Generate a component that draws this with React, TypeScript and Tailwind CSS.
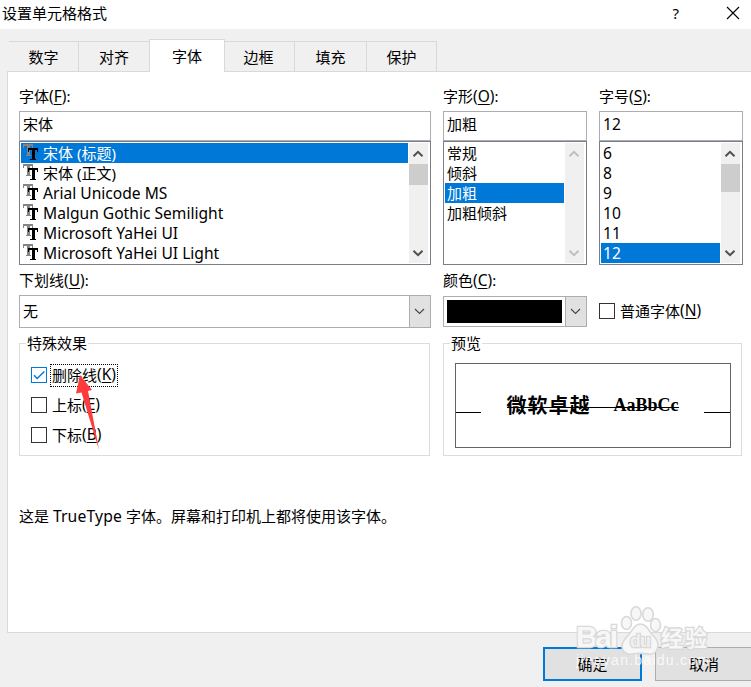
import { useState } from "react";
import type { ReactNode } from "react";
import clsx from "clsx";

const tabs = [
  { name: "数字", width: "w-[70px]" },
  { name: "对齐", width: "w-[71px]" },
  { name: "字体", width: "-ml-px w-[76px]" },
  { name: "边框", width: "w-[70px] pr-0.5" },
  { name: "填充", width: "w-[72px]" },
  { name: "保护", width: "w-[70px]" },
];

const fonts = [
  "宋体 (标题)",
  "宋体 (正文)",
  "Arial Unicode MS",
  "Malgun Gothic Semilight",
  "Microsoft YaHei UI",
  "Microsoft YaHei UI Light",
];
const fontStyles = ["常规", "倾斜", "加粗", "加粗倾斜"];
const sizes = ["6", "8", "9", "10", "11", "12"];

function Hotkey({ letter }: { letter: string }) {
  return (
    <span className="text-[15.5px]">
      (<span className="underline underline-offset-2">{letter}</span>)
    </span>
  );
}

function Label({ text, hotkey }: { text: string; hotkey: string }) {
  return (
    <div className="h-5 leading-5 whitespace-nowrap">
      {text}
      <Hotkey letter={hotkey} />:
    </div>
  );
}

function Chevron({ up, faded }: { up?: boolean; faded?: boolean }) {
  return (
    <svg
      width="12"
      height="8"
      viewBox="0 0 12 8"
      fill="none"
      strokeWidth="2"
      className={clsx("mr-px", faded ? "stroke-[#bfbfbf]" : "stroke-[#505050]")}
    >
      <path d={up ? "M1.5 6.3 6 1.8l4.5 4.5" : "M1.5 1.7 6 6.2l4.5-4.5"} />
    </svg>
  );
}

function TrueTypeIcon() {
  return (
    <svg width="16" height="18" viewBox="0 0 16 18" shapeRendering="crispEdges" className="shrink-0">
      <path d="M0 0h10v4H9V2H7v9h1v1H3v-1h1V2H1v2H0z" fill="#848484" />
      <path d="M5 4h10v4h-1V6h-2v9h1v1H7v-1h2V6H6v2H5z" fill="#000" />
    </svg>
  );
}

function ListBox({
  items,
  value,
  onChange,
  icons,
  thumb,
}: {
  items: string[];
  value: string;
  onChange: (v: string) => void;
  icons?: boolean;
  thumb?: string;
}) {
  return (
    <div className="flex h-[124px] border border-[#7a7e87] bg-white p-px">
      <ul className="mr-px flex-1">
        {items.map((item) => (
          <li
            key={item}
            onClick={() => onChange(item)}
            className={clsx(
              "flex h-5 items-center gap-1 whitespace-pre pl-0.5 leading-5",
              item === value && "bg-[#0078d7] text-white"
            )}
          >
            {icons && <TrueTypeIcon />}
            <span className={/^[\x20-\x7e]+$/.test(item) ? "text-[15.6px]" : ""}>{item}</span>
          </li>
        ))}
      </ul>
      {/* Scrollbar */}
      <div className="mr-px flex w-[19px] flex-col items-center bg-[#f0f0f0]">
        <div className="flex h-[21px] shrink-0 items-center">
          <Chevron up faded={!thumb} />
        </div>
        {thumb && <div className={clsx("w-full bg-[#cdcdcd]", thumb)} />}
        <div className="mt-auto flex h-[21px] items-center">
          <Chevron faded={!thumb} />
        </div>
      </div>
    </div>
  );
}

function Field({ children }: { children: ReactNode }) {
  return (
    <div className="flex h-[30px] items-center border border-[#abadb3] bg-white pb-[3px] pl-[3px]">{children}</div>
  );
}

function ComboButton() {
  return (
    <div className="flex w-[22px] items-center justify-center border border-[#abadb3] bg-[#e1e1e1] pr-px">
      <svg width="11" height="7" viewBox="0 0 11 7" fill="none" stroke="#444" strokeWidth="1.1">
        <path d="m1 1 4.5 4.5L10 1" />
      </svg>
    </div>
  );
}

function CheckBox({
  text,
  hotkey,
  checked,
  focused,
  onClick,
}: {
  text: string;
  hotkey: string;
  checked?: boolean;
  focused?: boolean;
  onClick?: () => void;
}) {
  return (
    <div className="flex h-6 items-center" onClick={onClick}>
      <div
        className={clsx(
          "flex size-4 items-center justify-center border bg-white",
          checked ? "border-[#0078d7]" : "border-[#333]"
        )}
      >
        {checked && (
          <svg width="14" height="14" viewBox="0 0 14 14" fill="none" stroke="#0078d7" strokeWidth="1.4">
            <path d="m2 7.2 3.2 3.2L12.3 3.4" />
          </svg>
        )}
      </div>
      <span
        className={clsx(
          "ml-[3px] flex h-[23px] items-center border border-dotted px-px whitespace-nowrap",
          focused ? "border-black" : "border-transparent"
        )}
      >
        {text}
        <Hotkey letter={hotkey} />
      </span>
    </div>
  );
}

function Group({ title, className, children }: { title: string; className: string; children: ReactNode }) {
  return (
    <fieldset className={clsx("relative h-[113px] border border-[#dcdcdc]", className)}>
      <div className="absolute -top-[11px] left-[6px] bg-white px-px leading-5">{title}</div>
      {children}
    </fieldset>
  );
}

function Watermark() {
  return (
    <svg
      className="pointer-events-none absolute top-[600px] left-[570px]"
      width="145"
      height="75"
      viewBox="0 0 145 75"
      fontFamily="'Liberation Sans', 'Noto Sans CJK SC', sans-serif"
    >
      <g fill="#f7f7f7" stroke="#d9d9d9" strokeWidth="1.6">
        <ellipse cx="56.500" cy="23" rx="5" ry="6.500" />
        <ellipse cx="66" cy="13.500" rx="5" ry="6.800" />
        <ellipse cx="78" cy="14.500" rx="5.300" ry="6.800" />
        <ellipse cx="85.500" cy="25" rx="5" ry="6.500" />
        <path d="M70 24c6 0 8 5 11 9s7 6 7 12c0 7-5 10-10 9-6-1-10-1-16 0-5 1-10-2-10-8 0-5 4-8 8-13 3-4 5-9 10-9z" />
        <g fontWeight="700" paintOrder="stroke" strokeWidth="2.600">
          <text x="6" y="47" fontSize="30" textLength="42">Bai</text>
          <text x="60" y="47" fontSize="18" textLength="21" fill="#f0f0f0">du</text>
          <text x="91" y="46" fontSize="22" textLength="46">经验</text>
        </g>
      </g>
      <text
        x="6"
        y="65"
        fontSize="14"
        fill="#fff"
        fillOpacity="0.8"
        textLength="133"
        lengthAdjust="spacing"
      >
        jingyan.baidu.com
      </text>
    </svg>
  );
}

export default function App() {
  const [tab, setTab] = useState("字体");
  const [font, setFont] = useState(fonts[0]);
  const [fontStyle, setFontStyle] = useState("加粗");
  const [size, setSize] = useState("12");
  const [strike, setStrike] = useState(true);

  return (
    <div className="relative h-[687px] w-[751px] overflow-hidden bg-[#f0f0f0] font-['Noto_Sans','Noto_Sans_CJK_SC',sans-serif] text-[15px] text-black select-none">
      {/* Title bar */}
      <header className="flex h-[29px] items-center bg-white pr-[11px] pb-[3px] pl-0.5">
        <span>设置单元格格式</span>
        <span className="mr-[47px] ml-auto">?</span>
        <svg width="14" height="14" viewBox="0 0 14 14" stroke="#000" strokeWidth="1.1">
          <path d="m1 1 12 12M13 1 1 13" />
        </svg>
      </header>

      {/* Tabs */}
      <nav className="flex h-[42px] items-end pl-[9px]">
        {tabs.map((t) => (
          <button
            key={t.name}
            onClick={() => setTab(t.name)}
            className={clsx(
              "border-t border-r border-[#d9d9d9]",
              t.width,
              t.name === tab ? "z-10 -mb-px h-[33px] border-l bg-white" : "h-[30px] pt-0.5"
            )}
          >
            {t.name}
          </button>
        ))}
      </nav>

      {/* Panel */}
      <main className="ml-[7px] h-[562px] border border-r-0 border-[#d9d9d9] bg-white pt-[14px] pl-[11px]">
        <div className="flex gap-3">
          <section className="w-[412px]">
            <Label text="字体" hotkey="F" />
            <div className="mt-[5px]">
              <Field>宋体</Field>
              <ListBox items={fonts} value={font} onChange={setFont} icons thumb="h-[21px]" />
            </div>
          </section>
          <section className="w-36">
            <Label text="字形" hotkey="O" />
            <div className="mt-[5px]">
              <Field>{fontStyle}</Field>
              <ListBox items={fontStyles} value={fontStyle} onChange={setFontStyle} />
            </div>
          </section>
          <section className="w-36">
            <Label text="字号" hotkey="S" />
            <div className="mt-[5px]">
              <Field>
                <span className="text-[15.6px]">{size}</span>
              </Field>
              <ListBox items={sizes} value={size} onChange={setSize} thumb="h-7" />
            </div>
          </section>
        </div>

        {/* Underline and color */}
        <div className="mt-[5px] flex h-[58px] gap-3">
          <section className="w-[412px]">
            <Label text="下划线" hotkey="U" />
            <div className="mt-[5px] flex h-[33px] border border-[#abadb3]">
              <span className="flex flex-1 items-center pl-[3px]">无</span>
              <div className="-my-px -mr-px flex">
                <ComboButton />
              </div>
            </div>
          </section>
          <section className="w-36">
            <Label text="颜色" hotkey="C" />
            <div className="mt-1.5 flex h-[31px] border border-[#abadb3]">
              <div className="my-[3px] ml-[3px] w-[115px] bg-black" />
              <div className="-my-px -mr-px ml-auto flex">
                <ComboButton />
              </div>
            </div>
          </section>
          <div className="mt-[29px]">
            <CheckBox text="普通字体" hotkey="N" />
          </div>
        </div>

        <div className="mt-[15px] flex gap-[13px]">
          <Group title="特殊效果" className="w-[411px]">
            <div className="mt-[19px] ml-[11px] flex flex-col gap-1.5">
              <CheckBox text="删除线" hotkey="K" checked={strike} focused onClick={() => setStrike(!strike)} />
              <CheckBox text="上标" hotkey="E" />
              <CheckBox text="下标" hotkey="B" />
            </div>
          </Group>
          <Group title="预览" className="w-[299px]">
            <div className="mt-[19px] ml-[11px] flex h-[85px] w-[276px] items-center justify-between border border-[#646464]">
              <div className="mt-[14px] h-px w-[25px] bg-black" />
              <div className="relative flex w-[172px] items-center justify-between font-['Liberation_Serif','Noto_Sans_CJK_SC',serif] text-[20px] font-semibold">
                <span className="tracking-[1px]">微软卓越</span>
                <span className="text-[18px]">AaBbCc</span>
                {strike && <div className="absolute top-4 left-0 h-px w-full bg-black" />}
              </div>
              <div className="mt-[14px] h-px w-[26px] bg-black" />
            </div>
          </Group>
        </div>

        <p className="mt-[50px] leading-5">
          这是 <span className="text-[15.7px] tracking-[0.15px]">TrueType</span> 字体。屏幕和打印机上都将使用该字体。
        </p>
      </main>

      {/* Buttons */}
      <footer className="mt-[14px] flex gap-[13px] pl-[543px]">
        <button className="h-[34px] w-[99px] shrink-0 border-2 border-[#0078d7] bg-[#e1e1e1]">确定</button>
        <button className="h-[34px] w-[98px] shrink-0 border border-[#adadad] bg-[#e1e1e1]">取消</button>
      </footer>

      {/* Pointer arrow */}
      <svg className="pointer-events-none absolute top-[374px] left-[74px]" width="28" height="78" viewBox="0 0 28 78">
        <path d="M6 1 18 16l-4 1L25 76 7.500 18.500 2 19.500z" fill="#ff3b3b" />
      </svg>

      <Watermark />
    </div>
  );
}
